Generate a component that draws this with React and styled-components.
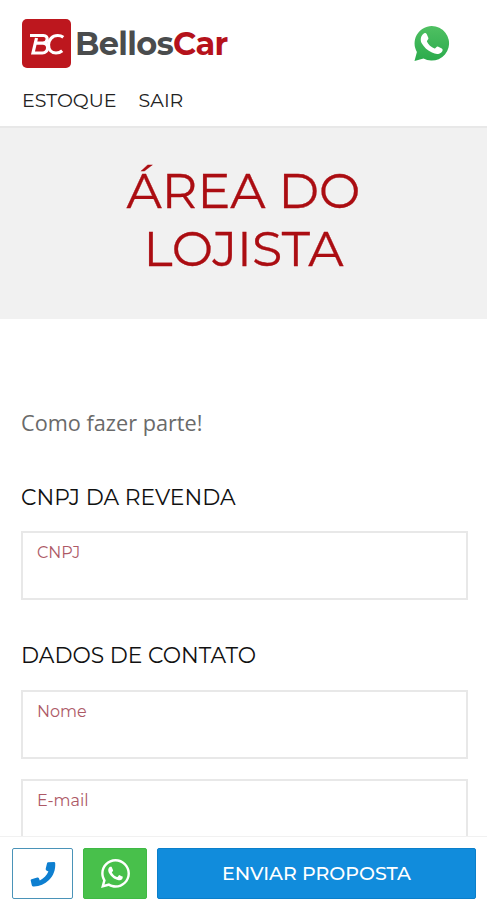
import styled, { createGlobalStyle } from "styled-components";
import { FaWhatsapp } from "react-icons/fa";

const GlobalStyle = createGlobalStyle`
  * {
    box-sizing: border-box;
  }
  body {
    margin: 0;
    background: #fff;
    font-family: Montserrat, Inter, sans-serif;
    overflow: hidden;
  }
`;

const Page = styled.div`
  display: flex;
  flex-direction: column;
  height: 900px;
  overflow: hidden;
`;

const Header = styled.header`
  flex: none;
  height: 128px;
  padding: 19px 37px 0 22px;
  border-bottom: 2px solid #e8e8e8;
`;

const TopRow = styled.div`
  display: flex;
  align-items: center;
  justify-content: space-between;
  height: 49px;
`;

const Brand = styled.div`
  display: flex;
  align-items: center;
  gap: 4px;
`;

const BrandName = styled.span`
  color: #4a4c4d;
  font-size: 32px;
  font-weight: 700;
  line-height: 49px;
  letter-spacing: -0.65px;
  white-space: nowrap;
`;

const BrandAccent = styled.span`
  color: #b5121b;
`;

const Nav = styled.nav`
  display: flex;
  gap: 22px;
  margin-top: 21px;
`;

const NavLink = styled.a`
  color: #222;
  font-size: 19px;
  line-height: 24px;
`;

const Hero = styled.section`
  flex: none;
  height: 191px;
  padding-top: 33px;
  background: #f1f1f1;
`;

const HeroTitle = styled.h1`
  width: 301px;
  margin: 0 auto;
  color: #ab0d12;
  font-size: 49.2px;
  font-weight: 400;
  line-height: 58px;
  text-align: center;
  -webkit-text-stroke: 0.3px #ab0d12;
`;

const Content = styled.main`
  flex: 1;
  min-height: 0;
  padding: 88px 19px 0 21px;
  overflow: hidden;
`;

const Intro = styled.p`
  margin: 0;
  color: #6a6a6a;
  font-family: "Open Sans", sans-serif;
  font-size: 21.7px;
  line-height: 32px;
`;

const SectionTitle = styled.h2`
  margin: ${({ $margin }) => $margin};
  color: #111;
  font-size: 21.8px;
  font-weight: 400;
  line-height: 30px;
`;

const Field = styled.label`
  display: block;
  height: 69px;
  margin-bottom: 20px;
  padding: 8px 14px;
  border: 2px solid #e8e8e8;
`;

const FieldLabel = styled.span`
  display: block;
  color: #ad5966;
  font-size: 16px;
  font-weight: 400;
  line-height: 23px;
`;

const ActionBar = styled.footer`
  display: flex;
  flex: none;
  gap: 10px;
  height: 64px;
  padding: 11px 11px 1px 12px;
  border-top: 1px solid #f1f1f1;
`;

const ActionButton = styled.button`
  display: flex;
  flex: ${({ $width }) => ($width ? `0 0 ${$width}px` : "1")};
  align-items: center;
  justify-content: center;
  padding: 0;
  border: 1px solid ${({ $border }) => $border};
  border-radius: 2px;
  background: ${({ $background }) => $background};
  color: ${({ $color }) => $color};
  font-family: inherit;
  font-size: 19px;
  font-weight: 500;
`;

function BrandMark() {
  return (
    <svg width="49" height="49" viewBox="0 0 49 49" fill="none">
      <rect width="49" height="49" rx="5" fill="#bd171e" />
      <g stroke="#fff" strokeWidth="3.2">
        <path d="M8 16.500h13.500c5.500 0 4.500 7.700-.7 7.700H12.500M14.500 19 11 34h9.300c6.500 0 7.500-9.800.5-9.800" />
        <path d="M41.300 18.300c-2-1.500-3.800-1.800-5.600-1.800-5.500 0-9.200 4.300-9.200 9.300 0 4.800 3 8.200 7.500 8.200 2.700 0 4.500-.8 6.200-2.300" />
      </g>
    </svg>
  );
}

function WhatsAppBadge() {
  return (
    <svg width="37" height="37" viewBox="0 0 37 37">
      <defs>
        <linearGradient id="badge" x1="0" y1="0" x2="0" y2="1">
          <stop offset="0" stopColor="#4fc062" />
          <stop offset="1" stopColor="#2bab4c" />
        </linearGradient>
      </defs>
      <path
        d="M18.700 1a17.300 17.300 0 1 1-8.200 32.500L1.500 36l2.400-9A17.300 17.300 0 0 1 18.700 1z"
        fill="url(#badge)"
      />
      <path
        d="M10.200 9c1.500-1.500 3-1 3.700.6l1.500 3.500c.4 1.300-1.600 2.500-1.500 3.300 1.500 3.300 4.200 5.700 7.600 7 1 .2 2-2.200 3.300-2l4 2c1.600.9.7 3.200-.8 4.300-2.600 2-5.700 1.500-9-.1-4.500-2-8-5.300-10.300-9.300C6.900 14.500 8 11 10.200 9z"
        fill="#fff"
      />
    </svg>
  );
}

function PhoneIcon() {
  return (
    <svg width="26" height="26" viewBox="0 0 26 26" fill="currentColor">
      <path d="M18.200 1.200 24 .9q1 0 1.200 1C25.700 8.500 23.500 14.500 19 19 14.500 23.500 9 25.800 3 25.500q-1-.1-1.200-1.200L.7 19.500q-.2-1 .8-1.300l5.800-1.700q1-.3 1.500.6l1 2.300c3.700-1.700 7-4.900 8.600-8.800l-2-1.200q-.9-.6-.7-1.600l1.400-5.700q.2-.9 1.100-.9z" />
    </svg>
  );
}

function FormField({ label }) {
  return (
    <Field>
      <FieldLabel>{label}</FieldLabel>
    </Field>
  );
}

function App() {
  return (
    <>
      <GlobalStyle />
      <Page>
        <Header>
          <TopRow>
            <Brand>
              <BrandMark />
              <BrandName>
                Bellos<BrandAccent>Car</BrandAccent>
              </BrandName>
            </Brand>
            <WhatsAppBadge />
          </TopRow>
          <Nav>
            <NavLink>ESTOQUE</NavLink>
            <NavLink>SAIR</NavLink>
          </Nav>
        </Header>
        <Hero>
          <HeroTitle>ÁREA DO LOJISTA</HeroTitle>
        </Hero>
        <Content>
          <Intro>Como fazer parte!</Intro>
          <SectionTitle $margin="43px 0 19px">CNPJ DA REVENDA</SectionTitle>
          <FormField label="CNPJ" />
          <SectionTitle $margin="40px 0 20px">DADOS DE CONTATO</SectionTitle>
          <FormField label="Nome" />
          <FormField label="E-mail" />
        </Content>
        <ActionBar>
          <ActionButton $width={61} $border="#4a93b8" $background="#fff" $color="#0e7fd0">
            <PhoneIcon />
          </ActionButton>
          <ActionButton $width={64} $border="#3fb945" $background="#48c04b" $color="#fff">
            <FaWhatsapp size={33} />
          </ActionButton>
          <ActionButton $border="#0b7fca" $background="#118cdc" $color="#fff">
            ENVIAR PROPOSTA
          </ActionButton>
        </ActionBar>
      </Page>
    </>
  );
}

export default App;
